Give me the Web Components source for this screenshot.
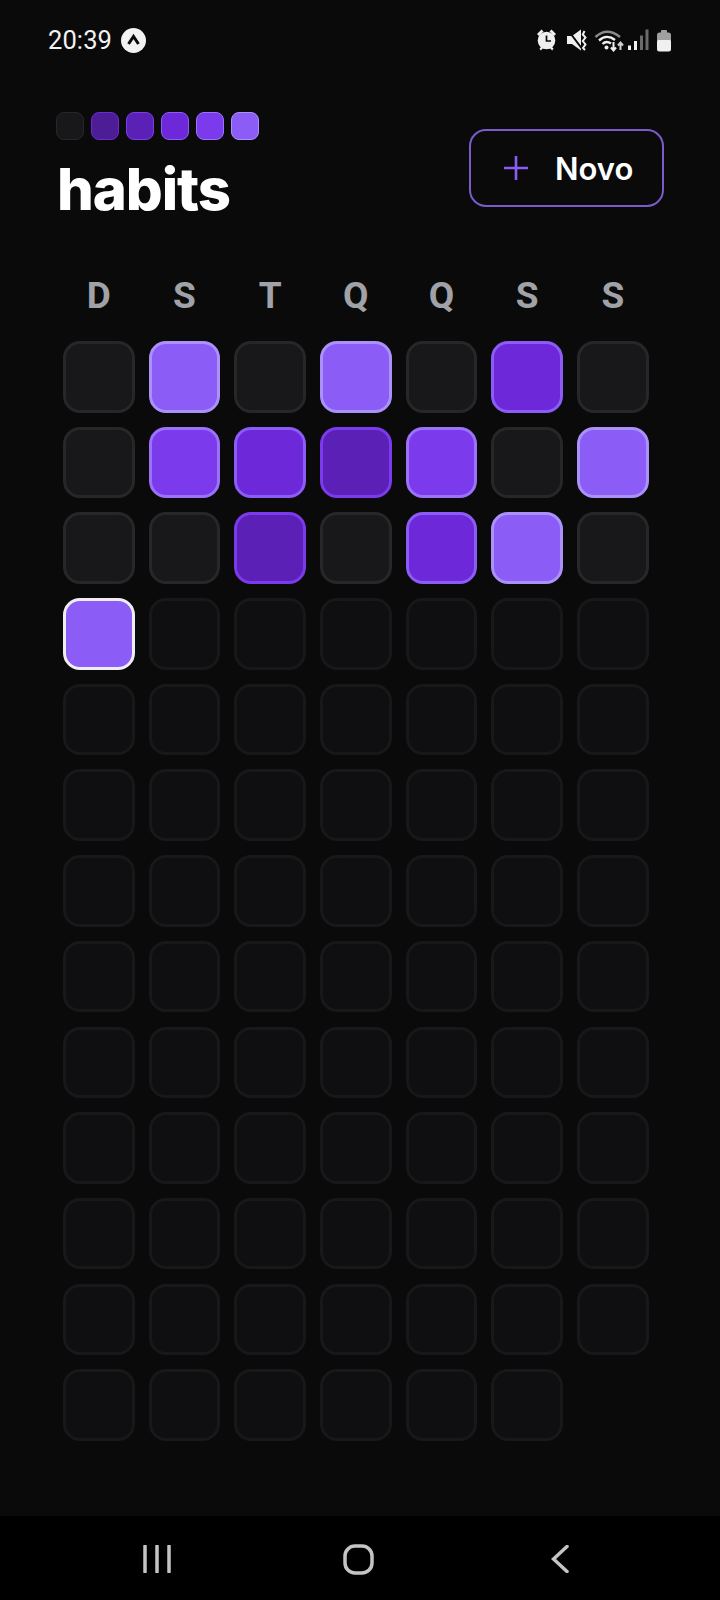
<!DOCTYPE html>
<html lang="pt"><head><meta charset="utf-8"><title>habits</title>
<style>html,body{margin:0;padding:0;background:#0a0a0b}</style></head>
<body>
<habit-app></habit-app>
<script>
function el(name, css, html){
  customElements.define(name, class extends HTMLElement{
    constructor(){super();this.attachShadow({mode:'open'}).innerHTML='<style>'+css+'</style>'+html;}
  });
}
el('status-bar',`:host{display:flex;align-items:center;height:80px;padding:0 48px 0 48px;box-sizing:border-box;color:#f2f2f2;font:400 25.5px/30px Roboto,sans-serif}
.t{letter-spacing:.1px}.a{width:25px;height:25px;margin-left:9px;flex:none}.sp{flex:1}
svg{display:block;flex:none}`,
`<span class="t">20:39</span>
<svg class="a" viewBox="0 0 25 25"><circle cx="12.5" cy="12.5" r="12.5" fill="#f2f2f2"/><path d="M7.5 16 12.5 8.5 17.5 16" fill="none" stroke="#0a0a0b" stroke-width="3"/></svg>
<span class="sp"></span>
<svg width="136" height="24" viewBox="0 0 136 24">
 <g fill="#f0f0f0">
  <circle cx="10.500" cy="12.500" r="8.800"/>
  <path d="M1 6 5.500 1.500 7.500 3.600 3 8ZM20 6 15.500 1.500 13.500 3.600 18 8ZM3.500 20.500 5.500 18.500 7 20.300 4.800 22.500ZM17.500 20.500 15.500 18.500 14 20.300 16.200 22.500Z"/>
 </g>
 <path d="M10.500 7.500v5.500h4.500" fill="none" stroke="#0a0a0b" stroke-width="1.700"/>
 <path d="M31 8h5L45 1.500v21l-9-6.500h-5Z" fill="#f0f0f0"/>
 <path d="M33 3.500 47 22" stroke="#0a0a0b" stroke-width="2"/>
 <path d="M48.500 3 46.800 6.500 49.500 9.500 46.800 13 49.500 16.500 47 20 49 22" fill="none" stroke="#f0f0f0" stroke-width="2"/>
 <path d="M59.500 9C67 2 75 2 84 9" fill="none" stroke="#8a8a8a" stroke-width="2.400"/>
 <path d="M63 12.500C68 8 74 8 79 12" fill="none" stroke="#f0f0f0" stroke-width="2.400"/>
 <path d="M66.500 16C69 13.500 72 13.500 75 15.500" fill="none" stroke="#f0f0f0" stroke-width="2.400"/>
 <circle cx="70.500" cy="19.500" r="2" fill="#f0f0f0"/>
 <path d="M77.500 14v8M75 19.500l2.500 3 2.500-3" fill="none" stroke="#f0f0f0" stroke-width="2"/>
 <path d="M84.500 22v-7M82 17.500l2.500-3 2.500 3" fill="none" stroke="#cfcfcf" stroke-width="2"/>
 <g fill="#f0f0f0"><rect x="92" y="17.500" width="3" height="4.500"/><rect x="98" y="13" width="3" height="9"/></g>
 <g fill="#6a6a6a"><rect x="104" y="7.500" width="3" height="14.500"/><rect x="109.500" y="1.500" width="3" height="20.500"/></g>
 <rect x="121" y="11" width="14" height="12.500" rx="2.500" fill="#f0f0f0"/>
 <path d="M121 12V7a2.500 2.500 0 0 1 2.500-2.500h9A2.500 2.500 0 0 1 135 7v5Z" fill="#a0a0a0"/>
 <rect x="125" y="2" width="6" height="4" rx="1" fill="#a0a0a0"/>
</svg>`);

el('habit-cell',`:host{display:block;box-sizing:border-box;width:var(--s,71.6px);height:var(--s,71.6px);border-radius:var(--r,17px);border:var(--b,3px) solid #18181a;background:#0f0f11}
:host([l="0"]){background:#18181b;border-color:#27272a}
:host([l="1"]){background:#4c1d95;border-color:#6d28d9}
:host([l="2"]){background:#5b21b6;border-color:#7c3aed}
:host([l="3"]){background:#6d28d9;border-color:#8b5cf6}
:host([l="4"]){background:#7c3aed;border-color:#9b72f8}
:host([l="5"]){background:#8b5cf6;border-color:#ab92fa}
:host([today]){border-color:#efedf3}`,``);

el('habit-legend',`:host{display:flex;gap:7px;--s:28px;--r:8px;--b:1.500px}`,
[0,1,2,3,4,5].map(i=>'<habit-cell l="'+i+'"></habit-cell>').join(''));

el('new-button',`:host{display:flex;align-items:center;box-sizing:border-box;width:195px;height:78px;border:2px solid #7a5cc9;border-radius:17px;padding-left:33px;color:#fff;font:600 31px/1 Inter,sans-serif}
svg{display:block;margin-right:27px;flex:none}`,
`<svg width="24" height="24" viewBox="0 0 24 24"><path d="M12 0v24M0 12h24" stroke="#8b5cf6" stroke-width="2.600"/></svg><slot></slot>`);

el('habit-header',`:host{display:flex;justify-content:space-between;align-items:flex-start;padding:32px 56px 0 56px}
.l{display:flex;flex-direction:column}
h1{margin:15px 0 0 1px;color:#fff;font:800 58px/68px Inter,sans-serif;letter-spacing:-1.100px}
new-button{margin-top:17px}`,
`<div class="l"><habit-legend></habit-legend><h1>habits</h1></div><new-button>Novo</new-button>`);

el('day-labels',`:host{display:grid;grid-template-columns:repeat(7,71.6px);column-gap:14.100px;padding:0 0 0 63px;height:44px;margin-top:51px;color:#a1a1a8;font:700 37px/44px Roboto,sans-serif;text-align:center}`,
'DSTQQSS'.split('').map(c=>'<span>'+c+'</span>').join(''));

const rows=[[0,5,0,5,0,3,0],[0,4,3,2,4,0,5],[0,0,2,0,3,5,0]];
let cells='';
for(let r=0;r<13;r++){for(let c=0;c<7;c++){
  if(r===12&&c===6)continue;
  if(r<3)cells+='<habit-cell l="'+rows[r][c]+'"></habit-cell>';
  else if(r===3&&c===0)cells+='<habit-cell l="5" today></habit-cell>';
  else cells+='<habit-cell></habit-cell>';
}}
el('habit-grid',`:host{display:grid;grid-template-columns:repeat(7,71.6px);gap:14.100px;padding:0 0 0 63px;margin-top:23px}`,cells);

el('nav-bar',`:host{display:flex;align-items:center;justify-content:space-between;box-sizing:border-box;height:84px;background:#000;padding:2px 151px 0 143px}
svg{display:block}`,
`<svg width="28" height="28" viewBox="0 0 28 28"><path d="M2 1v26M14 1v26M26 1v26" stroke="#c4c4c4" stroke-width="3.500" stroke-linecap="round"/></svg>
<svg width="31" height="31" viewBox="0 0 31 31" style="margin-left:-6px"><rect x="2" y="2" width="27" height="27" rx="10" fill="none" stroke="#c4c4c4" stroke-width="3.500"/></svg>
<svg width="18" height="28" viewBox="0 0 18 28"><path d="M16 1.500 2.500 14 16 26.500" fill="none" stroke="#c4c4c4" stroke-width="3.500" stroke-linecap="round"/></svg>`);

el('habit-app',`:host{display:flex;flex-direction:column;width:720px;height:1600px;background:#0a0a0b;overflow:hidden}
main{flex:1;min-height:0}`,
`<status-bar></status-bar><main><habit-header></habit-header><day-labels></day-labels><habit-grid></habit-grid></main><nav-bar></nav-bar>`);
</script>
</body></html>
